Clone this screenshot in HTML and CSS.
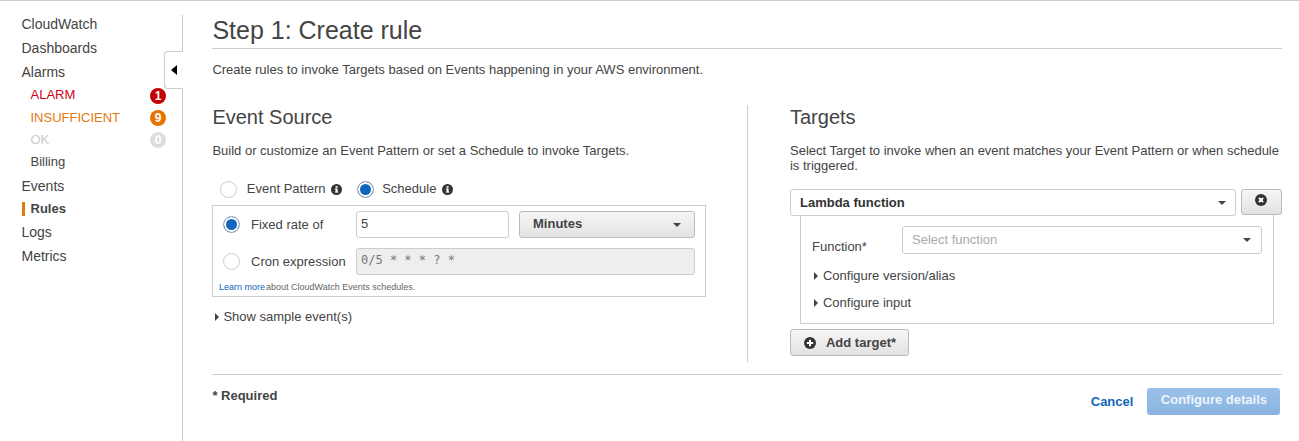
FILE: index.html
```html
<!DOCTYPE html>
<html lang="en">
<head>
<meta charset="utf-8">
<title>Step 1: Create rule</title>
<link rel="stylesheet" href="styles.css">
</head>
<body>
<div class="page">
  <aside class="sidebar">
    <nav class="nav">
      <a class="nav-top">CloudWatch</a>
      <a class="nav-top">Dashboards</a>
      <a class="nav-top">Alarms</a>
      <a class="nav-sub red first-sub">ALARM<span class="badge b-red">1</span></a>
      <a class="nav-sub orange">INSUFFICIENT<span class="badge b-orange">9</span></a>
      <a class="nav-sub grey">OK<span class="badge b-grey">0</span></a>
      <a class="nav-sub">Billing</a>
      <a class="nav-top events">Events</a>
      <a class="nav-sub active">Rules</a>
      <a class="nav-top">Logs</a>
      <a class="nav-top">Metrics</a>
    </nav>
    <div class="collapse"><span class="collapse-arrow"></span></div>
  </aside>
  <main class="main">
    <h1 class="title">Step 1: Create rule</h1>
    <p class="lead">Create rules to invoke Targets based on Events happening in your AWS environment.</p>
    <div class="columns">
      <section class="col-left">
        <h2 class="heading">Event Source</h2>
        <p class="sub">Build or customize an Event Pattern or set a Schedule to invoke Targets.</p>
        <div class="source-row">
          <span class="radio"></span>
          <span class="src-label">Event Pattern</span>
          <svg class="info" viewBox="0 0 12 12"><circle cx="6" cy="6" r="6" fill="#333"/><rect x="5" y="5" width="2.2" height="4" fill="#fff"/><rect x="4.2" y="8.2" width="3.8" height="1.1" fill="#fff"/><rect x="4.2" y="5" width="2" height="1" fill="#fff"/><rect x="5" y="2.3" width="2.2" height="1.8" fill="#fff"/></svg>
          <span class="radio on r-schedule"></span>
          <span class="src-label">Schedule</span>
          <svg class="info" viewBox="0 0 12 12"><circle cx="6" cy="6" r="6" fill="#333"/><rect x="5" y="5" width="2.2" height="4" fill="#fff"/><rect x="4.2" y="8.2" width="3.8" height="1.1" fill="#fff"/><rect x="4.2" y="5" width="2" height="1" fill="#fff"/><rect x="5" y="2.3" width="2.2" height="1.8" fill="#fff"/></svg>
        </div>
        <div class="schedule-box">
          <div class="sched-row">
            <span class="radio on"></span>
            <span class="sched-label">Fixed rate of</span>
            <div class="input rate">5</div>
            <div class="btn minutes"><span>Minutes</span><span class="caret"></span></div>
          </div>
          <div class="sched-row cron-row">
            <span class="radio"></span>
            <span class="sched-label">Cron expression</span>
            <div class="input cron">0/5 * * * ? *</div>
          </div>
          <div class="learn"><a>Learn more</a>about CloudWatch Events schedules.</div>
        </div>
        <div class="expander sample"><span class="tri"></span>Show sample event(s)</div>
      </section>
      <section class="col-right">
        <h2 class="heading">Targets</h2>
        <p class="sub">Select Target to invoke when an event matches your Event Pattern or when schedule is triggered.</p>
        <div class="target-row">
          <div class="select strong"><span>Lambda function</span><span class="caret"></span></div>
          <div class="btn remove">
            <svg class="ico" viewBox="0 0 12 12"><circle cx="6" cy="6" r="6" fill="#333"/><path d="M3.9 3.9l4.2 4.2M8.1 3.9l-4.2 4.2" stroke="#fff" stroke-width="2"/></svg>
          </div>
        </div>
        <div class="target-panel">
          <div class="fn-row">
            <span class="fn-label">Function*</span>
            <div class="select fn"><span>Select function</span><span class="caret"></span></div>
          </div>
          <div class="expander"><span class="tri"></span>Configure version/alias</div>
          <div class="expander conf-input"><span class="tri"></span>Configure input</div>
        </div>
        <div class="btn add">
          <svg class="ico" viewBox="0 0 12 12"><circle cx="6" cy="6" r="6" fill="#333"/><path d="M6 2.8v6.4M2.8 6h6.4" stroke="#fff" stroke-width="2"/></svg>
          <span>Add target*</span>
        </div>
      </section>
    </div>
    <footer class="footer">
      <span class="required">* Required</span>
      <div class="actions">
        <a class="cancel">Cancel</a>
        <div class="primary">Configure details</div>
      </div>
    </footer>
  </main>
</div>
</body>
</html>
```
FILE: styles.css
```css
* { box-sizing: border-box; }
html, body { margin: 0; height: 100%; }
body {
  font-family: "Liberation Sans", Arial, sans-serif;
  font-size: 13px;
  color: #444;
  background: #fff;
  overflow: hidden;
}
.page {
  display: flex;
  height: 441px;
  border-top: 1px solid #ccc;
}
.sidebar {
  position: relative;
  width: 183px;
  flex: none;
  margin-top: 14px;
  border-right: 1px solid #ccc;
}
.nav { display: flex; flex-direction: column; margin-top: -3px; }
.nav a { display: flex; align-items: center; position: relative; }
.nav-top { height: 24px; padding-left: 21.5px; font-size: 14px; color: #444; }
.nav-sub { height: 22.4px; padding-left: 30.5px; font-size: 13px; color: #444; }
.first-sub { margin-top: -0.5px; }
.events { margin-top: 0.5px; }
.red { color: #d0021b; }
.orange { color: #e47911; }
.grey { color: #ccc; }
.active { font-weight: 700; }
.active::before {
  content: "";
  position: absolute;
  left: 22px;
  top: 4px;
  width: 3px;
  height: 14px;
  background: #e47911;
}
.badge {
  position: absolute;
  left: 150px;
  top: 4px;
  width: 16px;
  height: 16px;
  border-radius: 50%;
  color: #fff;
  font-size: 12px;
  font-weight: 700;
  line-height: 16px;
  text-align: center;
}
.b-red { background: #c40000; }
.b-orange { background: #e47600; }
.b-grey { background: #ddd; }
.collapse {
  position: absolute;
  left: 164px;
  top: 36px;
  width: 19px;
  height: 38px;
  background: #fff;
  border: 1px solid #ccc;
  border-right: 0;
  border-radius: 4px 0 0 4px;
}
.collapse-arrow {
  position: absolute;
  left: 6px;
  top: 13px;
  border-style: solid;
  border-width: 5.5px 6px 5.5px 0;
  border-color: transparent #000 transparent transparent;
}
.main {
  width: 1070px;
  margin-left: 29.4px;
  flex: none;
}
.title {
  margin: 0;
  height: 48px;
  padding-top: 14px;
  font-size: 25px;
  line-height: 30px;
  font-weight: 400;
  color: #444;
  border-bottom: 1px solid #ccc;
}
.lead { margin: 13px 0 0; line-height: 15px; }
.columns { display: flex; margin-top: 28px; }
.col-left {
  flex: none;
  width: 536px;
  padding-right: 41px;
  height: 257px;
  border-right: 1px solid #ccc;
}
.col-right { width: 492px; margin-left: 41.6px; flex: none; }
.heading {
  margin: 0;
  padding-top: 1px;
  font-size: 20px;
  line-height: 23px;
  font-weight: 400;
  color: #444;
}
.sub { margin: 14px 0 0; line-height: 15px; }
.source-row {
  display: flex;
  align-items: center;
  height: 18px;
  margin-top: 22px;
  padding-left: 8px;
}
.radio {
  width: 17px;
  height: 17px;
  flex: none;
  border: 1px solid #ccc;
  border-radius: 50%;
  background: #fff;
}
.radio.on {
  background: #1166bb;
  box-shadow: inset 0 0 0 2px #fff;
  border-color: #aab;
}
.src-label { margin-left: 9.4px; line-height: 15px; position: relative; top: -1px; }
.r-schedule + .src-label { margin-left: 8px; }
.info { width: 11px; height: 11px; margin-left: 5.6px; flex: none; }
.r-schedule { margin-left: 15px; }
.schedule-box {
  margin: 7px 0 0 -0.4px;
  width: 494px;
  height: 92px;
  border: 1px solid #ccc;
  padding-top: 5px;
}
.sched-row { display: flex; align-items: center; height: 27px; padding-left: 10px; }
.sched-row .radio { margin-right: 11px; }
.sched-label { width: 105px; flex: none; }
.cron-row { margin-top: 10px; }
.input {
  height: 27px;
  border: 1px solid #ccc;
  border-radius: 3px;
  padding: 0 4px;
  line-height: 24px;
  flex: none;
}
.rate { width: 153px; background: #fff; }
.cron {
  width: 339px;
  background: #eee;
  font-family: "DejaVu Sans Mono", monospace;
  font-size: 12px;
  color: #777;
  line-height: 23px;
}
.btn {
  display: flex;
  align-items: center;
  flex: none;
  border: 1px solid #bbb;
  border-radius: 3px;
  background: linear-gradient(#f6f6f6, #e2e2e2);
  font-weight: 700;
  color: #444;
}
.minutes {
  width: 176px;
  height: 27px;
  margin-left: 10px;
  padding: 0 13px;
  justify-content: space-between;
}
.minutes span:first-child { position: relative; top: -1px; }
.caret {
  width: 0;
  height: 0;
  flex: none;
  border-style: solid;
  border-width: 4px 4px 0 4px;
  border-color: #444 transparent transparent transparent;
}
.learn { margin: 6px 0 0 6px; font-size: 9px; line-height: 12px; color: #666; }
.learn a { color: #1166bb; margin-right: 1px; }
.expander { display: flex; align-items: center; line-height: 15px; }
.tri {
  width: 0;
  height: 0;
  margin-right: 5px;
  flex: none;
  border-style: solid;
  border-width: 4px 0 4px 4px;
  border-color: transparent transparent transparent #444;
}
.sample { margin: 12px 0 0 2px; }
.sample .tri { margin-left: 1px; margin-right: 4px; }
.target-row { display: flex; margin-top: 16px; }
.select {
  display: flex;
  align-items: center;
  justify-content: space-between;
  background: #fff;
  border: 1px solid #ccc;
  border-radius: 3px;
}
.strong {
  position: relative;
  z-index: 1;
  width: 446px;
  height: 27px;
  padding: 0 9px;
  font-weight: 700;
  color: #333;
}
.remove {
  width: 41px;
  height: 26px;
  margin-left: 5px;
  justify-content: center;
}
.remove .ico { position: relative; top: -2px; }
.ico { width: 12px; height: 12px; flex: none; }
.target-panel {
  width: 474px;
  height: 109px;
  margin: -1px 0 0 10px;
  border: 1px solid #ccc;
  border-top: 0;
  padding: 11px 11px 0;
}
.fn-row { display: flex; height: 28px; }
.fn-label { width: 90px; flex: none; margin-top: 13px; line-height: 15px; }
.fn {
  width: 360px;
  height: 28px;
  padding: 0 10px 0 9px;
  color: #aaa;
}
.fn span:first-child { position: relative; top: -1px; }
.target-panel .expander { margin: 14px 0 0 2px; }
.target-panel .conf-input { margin-top: 12px; }
.add {
  width: 119px;
  height: 27px;
  margin-top: 5px;
  padding-left: 13px;
}
.add span { margin-left: 10px; }
.footer {
  display: flex;
  justify-content: space-between;
  width: 1070px;
  height: 60px;
  margin-top: 12px;
  border-top: 1px solid #ccc;
}
.required { font-weight: 700; margin-top: 13px; line-height: 15px; }
.actions { display: flex; align-items: center; height: 27px; margin-top: 13px; padding-right: 2px; }
.cancel { font-weight: 700; color: #1166bb; }
.primary {
  width: 133px;
  height: 27px;
  margin-left: 14px;
  border-radius: 3px;
  background: linear-gradient(#9ac1ea, #8ab4e0);
  color: #eef4fb;
  font-weight: 700;
  text-align: center;
  line-height: 24px;
}
```
